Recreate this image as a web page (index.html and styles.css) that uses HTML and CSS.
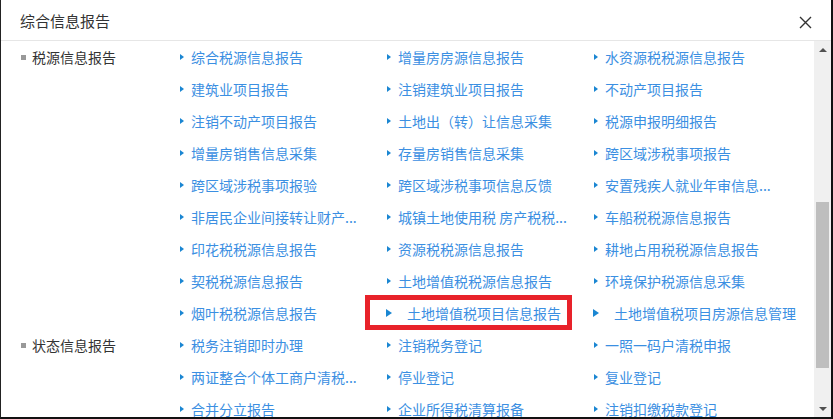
FILE: index.html
```html
<!DOCTYPE html>
<html lang="zh-CN">
<head>
    <meta charset="UTF-8">
    <meta name="viewport" content="width=device-width, initial-scale=1.0">
    <title>综合信息报告</title>
    <link rel="stylesheet" href="styles.css">
</head>
<body>
    <div class="dialog">
        <div class="dialog-head">
            <span class="dialog-title">综合信息报告</span>
            <span class="dialog-close">
                <svg width="13" height="13" viewBox="0 0 13 13"><path d="M1 1 L12 12 M12 1 L1 12" stroke="#333" stroke-width="1.4" fill="none"/></svg>
            </span>
        </div>

        <div class="dialog-main">
            <div class="dialog-body">
                <!-- 税源信息报告 -->
                <div class="section">
                    <div class="section-label"><i class="dot"></i>税源信息报告</div>
                    <div class="items">
                        <a class="item"><i class="arrow"></i>综合税源信息报告</a>
                        <a class="item"><i class="arrow"></i>增量房房源信息报告</a>
                        <a class="item"><i class="arrow"></i>水资源税税源信息报告</a>
                        <a class="item"><i class="arrow"></i>建筑业项目报告</a>
                        <a class="item"><i class="arrow"></i>注销建筑业项目报告</a>
                        <a class="item"><i class="arrow"></i>不动产项目报告</a>
                        <a class="item"><i class="arrow"></i>注销不动产项目报告</a>
                        <a class="item"><i class="arrow"></i>土地出（转）让信息采集</a>
                        <a class="item"><i class="arrow"></i>税源申报明细报告</a>
                        <a class="item"><i class="arrow"></i>增量房销售信息采集</a>
                        <a class="item"><i class="arrow"></i>存量房销售信息采集</a>
                        <a class="item"><i class="arrow"></i>跨区域涉税事项报告</a>
                        <a class="item"><i class="arrow"></i>跨区域涉税事项报验</a>
                        <a class="item"><i class="arrow"></i>跨区域涉税事项信息反馈</a>
                        <a class="item"><i class="arrow"></i>安置残疾人就业年审信息...</a>
                        <a class="item"><i class="arrow"></i>非居民企业间接转让财产...</a>
                        <a class="item"><i class="arrow"></i>城镇土地使用税 房产税税...</a>
                        <a class="item"><i class="arrow"></i>车船税税源信息报告</a>
                        <a class="item"><i class="arrow"></i>印花税税源信息报告</a>
                        <a class="item"><i class="arrow"></i>资源税税源信息报告</a>
                        <a class="item"><i class="arrow"></i>耕地占用税税源信息报告</a>
                        <a class="item"><i class="arrow"></i>契税税源信息报告</a>
                        <a class="item"><i class="arrow"></i>土地增值税税源信息报告</a>
                        <a class="item"><i class="arrow"></i>环境保护税源信息采集</a>
                        <a class="item"><i class="arrow"></i>烟叶税税源信息报告</a>
                        <a class="item item-big marked"><i class="arrow"></i>土地增值税项目信息报告</a>
                        <a class="item item-big"><i class="arrow"></i>土地增值税项目房源信息管理</a>
                    </div>
                </div>

                <!-- 状态信息报告 -->
                <div class="section">
                    <div class="section-label"><i class="dot"></i>状态信息报告</div>
                    <div class="items">
                        <a class="item"><i class="arrow"></i>税务注销即时办理</a>
                        <a class="item"><i class="arrow"></i>注销税务登记</a>
                        <a class="item"><i class="arrow"></i>一照一码户清税申报</a>
                        <a class="item"><i class="arrow"></i>两证整合个体工商户清税...</a>
                        <a class="item"><i class="arrow"></i>停业登记</a>
                        <a class="item"><i class="arrow"></i>复业登记</a>
                        <a class="item"><i class="arrow"></i>合并分立报告</a>
                        <a class="item"><i class="arrow"></i>企业所得税清算报备</a>
                        <a class="item"><i class="arrow"></i>注销扣缴税款登记</a>
                    </div>
                </div>
            </div>

            <div class="scrollbar">
                <div class="scroll-btn"><i class="tri-up"></i></div>
                <div class="scroll-track">
                    <div class="scroll-thumb"></div>
                </div>
                <div class="scroll-btn"><i class="tri-down"></i></div>
            </div>
        </div>
    </div>
</body>
</html>
```

FILE: styles.css
```css
body {
    margin: 0;
    padding: 0;
    background: #fff;
    font-family: "Noto Sans CJK SC", "Noto Sans", sans-serif;
}

.dialog {
    width: 833px;
    height: 419px;
    box-sizing: border-box;
    border-left: 1px solid #222;
    border-right: 2px solid #111;
    border-bottom: 2px solid #111;
    background: #fff;
    display: flex;
    flex-direction: column;
    overflow: hidden;
}

.dialog-head {
    height: 40px;
    flex: none;
    display: flex;
    align-items: center;
    justify-content: space-between;
    padding: 0 19px 0 19px;
    border-bottom: 1px solid #e6e6e6;
}

.dialog-title {
    font-size: 15px;
    color: #333;
}

.dialog-close {
    display: flex;
    margin-top: 5px;
}

.dialog-main {
    flex: 1;
    display: flex;
    min-height: 0;
}

.dialog-body {
    flex: 1;
    overflow: hidden;
    padding-left: 12px;
}

.section {
    display: flex;
}

.section-label {
    width: 157px;
    flex: none;
    padding-left: 8px;
    height: 32px;
    line-height: 32px;
    font-size: 14px;
    color: #333;
    display: flex;
    align-items: center;
}

.dot {
    display: inline-block;
    width: 5px;
    height: 5px;
    background: #999;
    margin-right: 6px;
}

.items {
    display: grid;
    grid-template-columns: repeat(3, 207px);
    grid-auto-rows: 32px;
}

.item {
    position: relative;
    display: flex;
    align-items: center;
    font-size: 14px;
    color: #3b8fe2;
    white-space: nowrap;
    cursor: pointer;
}

.arrow {
    display: inline-block;
    width: 0;
    height: 0;
    margin-left: 2px;
    margin-right: 7px;
    border-top: 3.5px solid transparent;
    border-bottom: 3.5px solid transparent;
    border-left: 4px solid #1a86d2;
}

.item-big .arrow {
    margin-left: 1px;
    margin-right: 15px;
    border-top-width: 4.5px;
    border-bottom-width: 4.5px;
    border-left-width: 6px;
}

.marked::after {
    content: "";
    position: absolute;
    left: -20px;
    top: -2px;
    width: 207px;
    height: 35px;
    box-sizing: border-box;
    border: 5px solid #e8222a;
}

.scrollbar {
    width: 17px;
    flex: none;
    background: #f0f0f0;
    display: flex;
    flex-direction: column;
}

.scroll-btn {
    height: 17px;
    display: flex;
    align-items: center;
    justify-content: center;
}

.tri-up {
    width: 0;
    height: 0;
    border-left: 4px solid transparent;
    border-right: 4px solid transparent;
    border-bottom: 4px solid #505050;
}

.tri-down {
    width: 0;
    height: 0;
    border-left: 4px solid transparent;
    border-right: 4px solid transparent;
    border-top: 4px solid #505050;
}

.scroll-track {
    flex: 1;
    padding: 144px 2px 0 2px;
}

.scroll-thumb {
    height: 166px;
    background: #bebebe;
}
```
